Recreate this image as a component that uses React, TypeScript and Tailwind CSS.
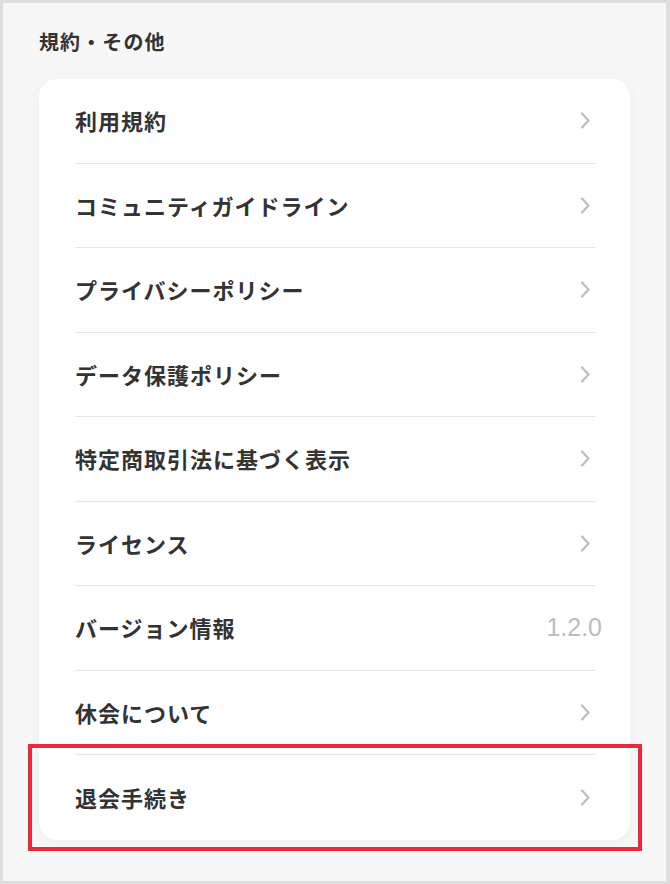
import React from "react";

const items: { label: string; value?: string }[] = [
  { label: "利用規約" },
  { label: "コミュニティガイドライン" },
  { label: "プライバシーポリシー" },
  { label: "データ保護ポリシー" },
  { label: "特定商取引法に基づく表示" },
  { label: "ライセンス" },
  { label: "バージョン情報", value: "1.2.0" },
  { label: "休会について" },
  { label: "退会手続き" },
];

const Chevron = () => (
  <svg width="11" height="19" viewBox="0 0 11 19" fill="none" className="mr-[5px]">
    <path d="M2 2.5 L8.5 9.5 L2 16.5" stroke="#bdbdbd" strokeWidth="2.2" strokeLinecap="round" strokeLinejoin="round" />
  </svg>
);

export default function App() {
  return (
    <div
      className="w-[670px] h-[884px] border-[3px] border-r-4 border-[#dedede] bg-[#f7f7f7] pl-[36px] pr-[36px]"
      style={{ fontFamily: '"Noto Sans CJK JP", "Noto Sans", sans-serif' }}
    >
      <h2 className="pt-[25px] text-[20px] leading-[28px] font-bold text-[#333] tracking-[0.055em]">規約・その他</h2>
      <div className="relative mt-[23px] w-[591px] rounded-[18px] bg-white pl-[36px] pr-[34px] shadow-[0_2px_14px_rgba(0,0,0,0.04)]">
        {items.map((item, i) => (
          <div
            key={item.label}
            className={
              "flex items-center justify-between h-[84.5px] " +
              (i < items.length - 1 ? "border-b border-[#e6e6e6]" : "")
            }
          >
            <span className="text-[22px] font-bold text-[#333] tracking-[0.045em]">{item.label}</span>
            {item.value ? (
              <span
                className="-mr-[6px] text-[25px] text-[#bdbdbd]"
                style={{ fontFamily: '"Liberation Sans", Arial, sans-serif' }}
              >
                {item.value}
              </span>
            ) : (
              <Chevron />
            )}
          </div>
        ))}
        <div className="absolute top-[665px] -left-[11px] -right-[12px] -bottom-[11px] border-[4px] border-[#e62a3f]" />
      </div>
    </div>
  );
}
